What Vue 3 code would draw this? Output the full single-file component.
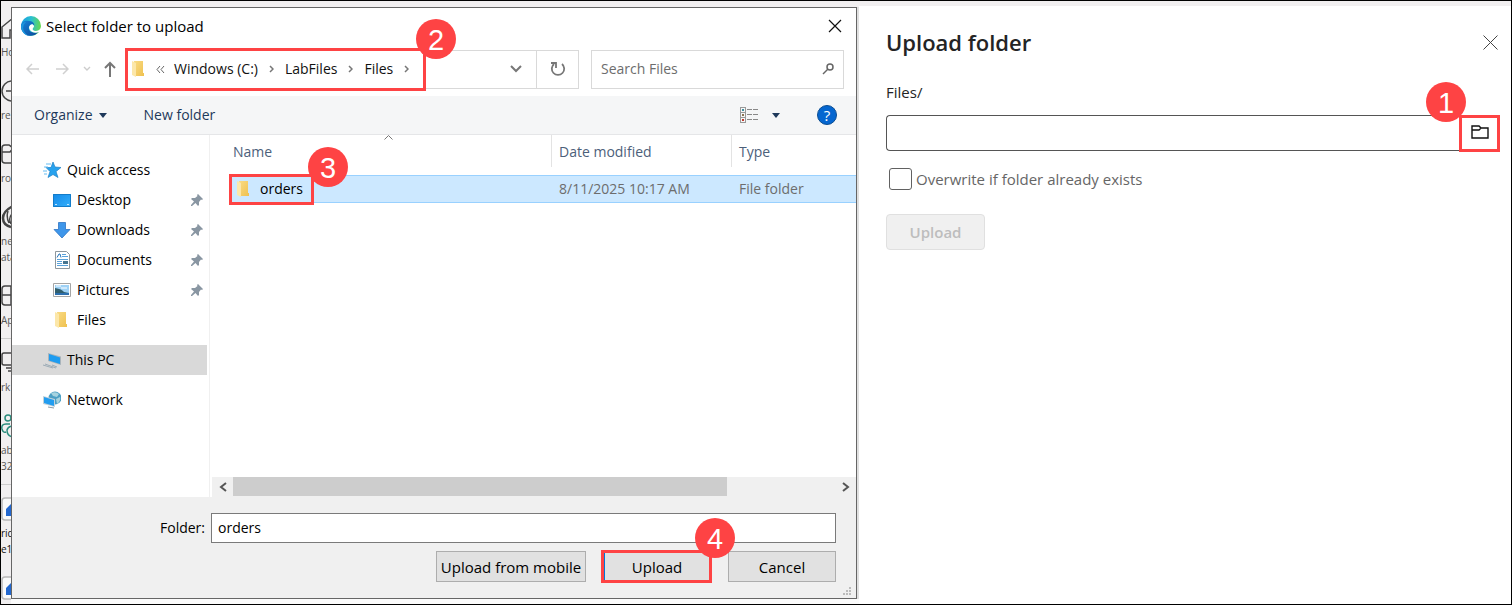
<script setup>
import { ref } from 'vue'

const railItems = [
  { icon: 'home', lines: ['Ho'] },
  { icon: 'create', lines: ['re'] },
  { icon: 'browse', lines: ['ro'] },
  { icon: 'lake', lines: ['ne', 'ata'] },
  { icon: 'apps', lines: ['Ap'], ruled: true },
  { icon: 'monitor', lines: ['rk'] },
  { icon: 'people', lines: ['ab', '32'], ruled: true },
  { icon: 'tile', lines: ['ric', 'e1'], dark: true },
  { icon: 'tile', lines: [] }
]
const places = [
  { name: 'Quick access', icon: 'star', level: 0 },
  { name: 'Desktop', icon: 'desktop', level: 1, pinned: true },
  { name: 'Downloads', icon: 'download', level: 1, pinned: true },
  { name: 'Documents', icon: 'document', level: 1, pinned: true },
  { name: 'Pictures', icon: 'picture', level: 1, pinned: true },
  { name: 'Files', icon: 'folder', level: 1 },
  { name: 'This PC', icon: 'pc', level: 0, active: true, spaced: true },
  { name: 'Network', icon: 'network', level: 0, spaced: true }
]
const crumbs = ['Windows (C:)', 'LabFiles', 'Files']
const folder = ref('orders')
const search = ref('')
const path = ref('')
const overwrite = ref(false)
</script>

<template>
  <div class="page">
    <svg class="defs" width="0" height="0" aria-hidden="true">
      <defs>
        <linearGradient id="gFolder" x1="0" x2="1" y1="0" y2="1">
          <stop offset="0" stop-color="#f9db84" /><stop offset="1" stop-color="#efc14f" />
        </linearGradient>
        <linearGradient id="gEdge" x1="0" x2="1" y1="0.3" y2="0.4">
          <stop offset="0" stop-color="#1a9fe0" /><stop offset="0.5" stop-color="#2bc0d0" /><stop offset="1" stop-color="#66d84e" />
        </linearGradient>
        <linearGradient id="gEdgeDark" x1="0" x2="1" y1="0" y2="1">
          <stop offset="0" stop-color="#1683d8" /><stop offset="1" stop-color="#0c4a9c" />
        </linearGradient>
        <linearGradient id="gBlue" x1="0" x2="1" y1="0" y2="1">
          <stop offset="0" stop-color="#1389e8" /><stop offset="1" stop-color="#35b0fb" />
        </linearGradient>
        <symbol id="folder" viewBox="0 0 18 18">
          <path d="M4 1h9v12h1v3H4z" fill="url(#gFolder)" />
          <path d="M2 1l4 2v14l-4-2z" fill="#fce7a9" />
        </symbol>
      </defs>
    </svg>

    <nav class="rail" aria-label="Workspace">
      <div v-for="(item, i) in railItems" :key="i" class="rail-item" :class="{ ruled: item.ruled, dark: item.dark }">
        <svg width="24" height="24" viewBox="0 0 24 24" fill="none" stroke="#444" stroke-width="1.5">
          <path v-if="item.icon === 'home'" d="M1 22V11L12 2l9 9v11h-6v-8H9v8z" />
          <template v-else-if="item.icon === 'create'"><circle cx="11" cy="12" r="10" /><path d="M5 12h12M11 6v12" /></template>
          <path v-else-if="item.icon === 'browse'" d="M1 6q0-3 3-3h4l4 3h8v15H4q-3 0-3-3zM1 10h8l3-4" />
          <template v-else-if="item.icon === 'lake'"><path d="M12 1Q2 6 2 13t8 9" stroke-width="2.500" /><path d="M7 6q-2 6 1 12M11 9q-4 4-1 10" stroke-width="1.500" /></template>
          <path v-else-if="item.icon === 'apps'" d="M4 2h16v19H4q-3 0-3-3V5q0-3 3-3zM1 11h19M10 2v19" />
          <path v-else-if="item.icon === 'monitor'" d="M3 2h18v12H3q-2 0-2-2V4q0-2 2-2zM5 17h14M7 20h10" />
          <g v-else-if="item.icon === 'people'" stroke="#2a8c7c"><circle cx="7" cy="4" r="3" /><path d="M9 10H5q-5 0-4 5 1 4 4 3M12 12q-5 0-6 4 0 6 6 7" /></g>
          <template v-else><rect x="1" y="1" width="24" height="22" rx="3" fill="#fafafa" stroke="#b8b8b8" /><path d="M5 12l6-6 6 4v9H5z" fill="#2368cf" stroke="none" /></template>
        </svg>
        <span v-for="line in item.lines" :key="line" class="rail-label">{{ line }}</span>
      </div>
    </nav>

    <div class="stage">
      <section class="dialog" role="dialog" aria-label="Select folder to upload">
        <header class="title-bar">
          <svg width="22" height="22" viewBox="0 0 22 22">
            <circle cx="11" cy="11" r="10" fill="url(#gEdge)" />
            <path d="M1 11c0-4 4-6 8-5 4 0 6 3 5 5-1-2-4-2-5 1-1 4 3 7 9 5-5 7-17 4-17-6z" fill="url(#gEdgeDark)" />
            <path d="M6 7c-5 4-3 11 3 14C4 20 1 16 1 11c1-3 3-4 5-4z" fill="#1c96dd" />
            <path d="M14 11c0 2-2 2-1 4 2 2 6 1 8-2l1 5-3-1c-5 2-10-1-10-5 1-3 4-4 5-1z" fill="#fff" />
          </svg>
          <h2>Select folder to upload</h2>
          <button class="plain close" type="button" aria-label="Close dialog">
            <svg width="14" height="14" viewBox="0 0 14 14" stroke="#111" stroke-width="1.2"><path d="M1 1l12 12M13 1L1 13" /></svg>
          </button>
        </header>

        <div class="address-row">
          <div class="nav-buttons">
            <button class="plain" type="button" aria-label="Back"><svg width="14" height="12" viewBox="0 0 14 12" fill="none" stroke="#d0d0d0" stroke-width="1.5"><path d="M13 6H2M6 1L1 6l5 5" /></svg></button>
            <button class="plain" type="button" aria-label="Forward"><svg width="14" height="12" viewBox="0 0 14 12" fill="none" stroke="#d0d0d0" stroke-width="1.5"><path d="M1 6h11M8 1l5 5-5 5" /></svg></button>
            <button class="plain" type="button" aria-label="Recent"><svg width="8" height="6" viewBox="0 0 8 6" fill="none" stroke="#ccc" stroke-width="1.4"><path d="M1 1l3 3 3-3" /></svg></button>
            <button class="plain" type="button" aria-label="Up"><svg width="12" height="16" viewBox="0 0 12 16" fill="none" stroke="#777" stroke-width="2"><path d="M6 16V2M1 7l5-5 5 5" /></svg></button>
          </div>
          <div class="address">
            <div class="crumbs">
              <svg width="18" height="18"><use href="#folder" /></svg>
              <svg class="double" width="9" height="7" viewBox="0 0 9 7" fill="none" stroke="#666" stroke-width="1"><path d="M4 0L1 3.500l3 3.500M8 0L5 3.500l3 3.500" /></svg>
              <template v-for="c in crumbs" :key="c">
                <a href="#">{{ c }}</a>
                <svg class="sep" width="5" height="8" viewBox="0 0 5 8" fill="none" stroke="#777" stroke-width="1.500"><path d="M1 1l3 3-3 3" /></svg>
              </template>
              <span class="badge address-badge">2</span>
            </div>
            <button class="plain history" type="button" aria-label="Previous locations"><svg width="12" height="8" viewBox="0 0 12 8" fill="none" stroke="#777" stroke-width="2"><path d="M1 1l5 5 5-5" /></svg></button>
            <button class="plain refresh" type="button" aria-label="Refresh"><svg width="16" height="16" viewBox="0 0 16 16" fill="none" stroke="#777" stroke-width="1.800"><path d="M4 3a6.200 6.200 0 1 0 8 0M1 2h5v5" /></svg></button>
          </div>
          <label class="search">
            <input v-model="search" type="text" placeholder="Search Files" aria-label="Search Files" />
            <svg width="12" height="12" viewBox="0 0 12 12" fill="none" stroke="#666" stroke-width="1.500"><circle cx="8" cy="4" r="3" /><path d="M6 6l-5 5" /></svg>
          </label>
        </div>

        <div class="toolbar">
          <button class="plain" type="button">Organize <svg class="caret" width="8" height="5" viewBox="0 0 8 5"><path d="M0 0h8L4 5z" fill="#1e395b" /></svg></button>
          <button class="plain new-folder" type="button">New folder</button>
          <button class="plain view" type="button" aria-label="Change view">
            <svg width="18" height="16" viewBox="0 0 18 16" fill="none" shape-rendering="crispEdges"><path d="M.5.500h5v15h-5zM0 5.500h6M0 10.500h6" stroke="#999" /><path d="M7 2.500h5M13 2.500h5M7 7.500h5M13 7.500h5M7 12.500h5M13 12.500h5" stroke="#888" /><path d="M2 2h2v2H2z" fill="#3f8f9f" /><path d="M2 7h2v2H2z" fill="#8a7350" /><path d="M2 12h2v2H2z" fill="#c0392b" /></svg>
            <svg width="8" height="5" viewBox="0 0 8 5"><path d="M0 0h8L4 5z" fill="#1e395b" /></svg>
          </button>
          <button class="help" type="button" aria-label="Help">?</button>
        </div>

        <div class="body">
          <ul class="places">
            <li v-for="p in places" :key="p.name" :class="{ active: p.active, nested: p.level, spaced: p.spaced }">
              <a href="#">
                <svg width="18" height="18" viewBox="0 0 18 18">
                  <template v-if="p.icon === 'star'"><path d="M10 1l2 5 6 .5-5 4 2 6-5-3-5 3 2-6-4-4h5z" fill="#27a2ee" stroke="#1d7fc6" stroke-width=".7" /><path d="M3 3h5M1 6h4M0 10h4M1 13h3" stroke="#64bdf3" /></template>
                  <template v-else-if="p.icon === 'desktop'"><path d="M0 3h18v13H0z" fill="url(#gBlue)" /><path d="M.5 3.500h17v12H.5z" fill="none" stroke="#147cc8" /><path d="M2 13.500h2M14 13.500h2" stroke="#bfe5ff" /></template>
                  <path v-else-if="p.icon === 'download'" d="M5.500 1.500h7v7H17L9 17 1 8.500h4.500z" fill="#3e96ea" stroke="#2f75c4" stroke-width=".8" />
                  <template v-else-if="p.icon === 'document'"><path d="M2.500.5h11l3 3v14h-14z" fill="#fff" stroke="#8e979d" /><path d="M9 3.500h4M9 5.500h6M4 8.500h11M4 10.500h5M4 12.500h5M4 14.500h11" stroke="#5aa2da" /><path d="M4 6.500l2-3.500h1l1 3.500" fill="none" stroke="#2675bb" /><path d="M10 10h5v3h-5z" fill="#46758f" /></template>
                  <template v-else-if="p.icon === 'picture'"><path d="M.5 2.500h17v13H.5z" fill="#fff" stroke="#a5a5a5" /><path d="M2 4h14v10H2z" fill="#9fd2f6" /><path d="M2 7q7 1 9 4l5 1v2H2z" fill="#315f6e" /><path d="M2 12h14v2H2z" fill="#2d6fae" /><path d="M3 5h5M8 7h6" stroke="#fff" /></template>
                  <use v-else-if="p.icon === 'folder'" href="#folder" />
                  <template v-else-if="p.icon === 'pc'"><path d="M5 2l13 3.500V14L5 10z" fill="#a9b4bb" /><path d="M6 3l11 3.500V13L6 9.500z" fill="#1e9cf0" /><path d="M9 14l5 2M0 14l10 3M2 13l11 4" stroke="#9cabb5" /></template>
                  <template v-else><circle cx="12" cy="7" r="6.500" fill="#4c9fc4" /><path d="M8 2q5-2 8 1l-2 3-4-1zM13 8l4-2q1 4-3 7z" fill="#a7d3df" /><path d="M0 5l12 3v8L0 13z" fill="#c3d2da" /><path d="M1 6l10 3v6L1 12z" fill="#229df0" /><path d="M5 16l6 1" stroke="#8a9aa5" /></template>
                </svg>
                <span>{{ p.name }}</span>
                <svg v-if="p.pinned" class="pin" width="12" height="12" viewBox="0 0 12 12"><path d="M7 0l5 5-1 1-1-.5L8 8v3L7 12 4.500 9 1 12l-1 0 0-1L3 7.500 0 5l1-1h3l2.500-2L6 1z" fill="#8996a2" /></svg>
              </a>
            </li>
          </ul>

          <div class="listing">
            <svg class="sort" width="9" height="5" viewBox="0 0 9 5" fill="none" stroke="#777"><path d="M.5 4.500l4-4 4 4" /></svg>
            <table>
              <colgroup><col class="c-name" /><col class="c-date" /><col /></colgroup>
              <thead>
                <tr><th scope="col"><div>Name</div></th><th scope="col"><div>Date modified</div></th><th scope="col"><div>Type</div></th></tr>
              </thead>
              <tbody>
                <tr>
                  <td>
                    <div class="file"><svg width="18" height="18"><use href="#folder" /></svg><span>orders</span><span class="badge file-badge">3</span></div>
                  </td>
                  <td>8/11/2025 10:17 AM</td>
                  <td>File folder</td>
                </tr>
              </tbody>
            </table>
            <div class="scrollbar">
              <button class="plain" type="button" aria-label="Scroll left"><svg width="8" height="10" viewBox="0 0 8 10" fill="none" stroke="#555" stroke-width="2"><path d="M7 1L2 5l5 4" /></svg></button>
              <div class="track"><div class="thumb"></div></div>
              <button class="plain" type="button" aria-label="Scroll right"><svg width="8" height="10" viewBox="0 0 8 10" fill="none" stroke="#555" stroke-width="2"><path d="M1 1l5 4-5 4" /></svg></button>
            </div>
          </div>
        </div>

        <footer class="actions">
          <div class="folder-row">
            <label for="folder-name">Folder:</label>
            <input id="folder-name" v-model="folder" type="text" />
          </div>
          <div class="buttons">
            <button class="mobile" type="button">Upload from mobile</button>
            <div class="marked">
              <button type="button">Upload</button>
              <span class="badge upload-badge">4</span>
            </div>
            <button class="cancel" type="button">Cancel</button>
          </div>
          <svg class="grip" width="9" height="8" viewBox="0 0 9 8" fill="#bbb"><path d="M6 0h2v2H6zM3 3h2v2H3zM6 3h2v2H6zM0 6h2v2H0zM3 6h2v2H3zM6 6h2v2H6z" /></svg>
        </footer>
      </section>
    </div>

    <aside class="panel">
      <header>
        <h1>Upload folder</h1>
        <button class="plain" type="button" aria-label="Close panel"><svg width="15" height="15" viewBox="0 0 15 15" stroke="#444"><path d="M.5.5l14 14M14.500.5l-14 14" /></svg></button>
      </header>
      <label class="path-label" for="upload-path">Files/</label>
      <div class="path">
        <input id="upload-path" v-model="path" type="text" />
        <button class="browse" type="button" aria-label="Browse for folder">
          <svg width="18" height="14" viewBox="0 0 18 14" fill="none" stroke="#111" stroke-width="1.400"><path d="M1 13V1h7l2 2h7v10zM1 5h7l2-2" /></svg>
        </button>
        <span class="badge path-badge">1</span>
      </div>
      <label class="check"><input v-model="overwrite" type="checkbox" /><span>Overwrite if folder already exists</span></label>
      <button class="submit" type="button" disabled>Upload</button>
    </aside>
  </div>
</template>

<style>
html, body { margin: 0; background: #f1eff0; }
</style>

<style scoped>
* { box-sizing: border-box; }
.page {
  position: relative;
  display: grid;
  grid-template-columns: 10px minmax(0, 848fr) minmax(0, 652fr);
  height: 100vh;
  min-height: 560px;
  padding-top: 5px;
  border: 1px solid #000;
  background: #f1eff0;
  color: #111;
  font: 14px/20px "Open Sans", "Noto Sans", sans-serif;
  overflow: hidden;
}
.defs { position: absolute; }
svg { display: block; flex: none; }
button, input { font: inherit; color: inherit; }
.plain { display: flex; align-items: center; justify-content: center; padding: 0; border: 0; background: none; }
a { color: inherit; text-decoration: none; }
h1, h2, ul { margin: 0; padding: 0; }

.rail { min-height: 0; padding-top: 10px; overflow: hidden; }
.rail-item { display: flex; flex-direction: column; margin-bottom: 19px; }
.rail-item svg { margin-bottom: 4px; }
.rail-item.ruled { padding-bottom: 10px; margin-bottom: 12px; border-bottom: 1px solid #ccc; }
.rail-label { font-size: 10px; line-height: 16px; color: #555; }
.rail-item.dark .rail-label { color: #111; }

.stage {
  min-width: 0;
  display: flex;
  padding: 1px 2px 5px 0;
  background: linear-gradient(#f1eff0 0 1px, #e0e0e0 1px calc(100% - 5px), #fbfbfb calc(100% - 5px));
}
.dialog {
  flex: 1;
  min-width: 0;
  display: flex;
  flex-direction: column;
  border: 1px solid #666;
  background: #fff;
}
.title-bar { display: flex; align-items: center; height: 36px; padding: 0 14px 0 8px; }
h2 { margin-left: 4px; font-size: 15px; font-weight: 400; line-height: 20px; color: #000; }
.close { margin-left: auto; }

.address-row { display: flex; align-items: center; height: 52px; padding: 0 12px 2px 14px; }
.nav-buttons { display: flex; align-items: center; width: 100px; }
.nav-buttons .plain:nth-child(2) { margin-left: 15px; }
.nav-buttons .plain:nth-child(3) { margin-left: 14px; }
.nav-buttons .plain:nth-child(4) { margin-left: 13px; }
.address { flex: 1; display: flex; height: 39px; border: 1px solid #d9d9d9; }
.crumbs {
  position: relative;
  display: flex;
  align-items: center;
  width: 301px;
  margin: -3px 0 -3px -2px;
  padding-left: 2px;
  border: 3px solid #fe4344;
  white-space: nowrap;
}
.double { margin: 0 9px 0 8px; }
.sep { margin: 0 11px; }
.history { margin-left: auto; width: 40px; }
.refresh { width: 42px; border-left: 1px solid #d9d9d9; }
.search { display: flex; align-items: center; width: 253px; height: 39px; margin-left: 12px; padding: 0 9px; border: 1px solid #d9d9d9; }
.search input { flex: 1; min-width: 0; padding: 0; border: 0; outline: 0; }
.search input::placeholder { color: #6d6d6d; opacity: 1; }

.toolbar { display: flex; align-items: center; height: 39px; padding: 0 19px 0 22px; border-bottom: 1px solid #e5e6e8; background: #f5f6f7; color: #1e395b; }
.caret { margin-left: 6px; }
.new-folder { margin-left: 37px; }
.view { gap: 14px; margin-left: auto; }
.help { width: 20px; height: 20px; margin-left: 37px; padding: 0; border: 1px solid #0b4d92; border-radius: 50%; background: #0566d0; color: #fff; font-size: 15px; line-height: 18px; }

.body { flex: 1; display: flex; min-height: 0; }
.places { width: 198px; flex: none; padding: 20px 2px 0 0; border-right: 1px solid #f0f0f0; list-style: none; color: #000; }
.places a { display: flex; align-items: center; gap: 6px; height: 30px; padding: 0 4px 0 31px; }
.places .nested a { padding-left: 41px; }
.places .spaced { margin-top: 10px; }
.places .active { background: #d9d9d9; }
.pin { margin-left: auto; }

.listing { position: relative; flex: 1; min-width: 0; display: flex; flex-direction: column; }
.sort { position: absolute; left: 174px; top: 0; }
table { width: 100%; padding-left: 19px; border-spacing: 0; table-layout: fixed; }
.c-name { width: 322px; }
.c-date { width: 180px; }
th { height: 40px; padding: 0 0 8px; text-align: left; font-weight: 400; color: #4c607a; }
th div { display: flex; align-items: center; height: 32px; padding: 2px 0 0 7px; border-left: 1px solid #e3e3e3; }
th:first-child div { padding-left: 3px; border-left-color: transparent; }
td { height: 28px; padding: 0 0 0 8px; border: solid #99d1ff; border-width: 1px 0; background: #cce8ff; color: #6d6d6d; }
td:first-child { padding: 0; color: #000; }
.file { position: relative; display: flex; align-items: center; width: 85px; height: 31px; margin: -3px 0; padding-left: 3px; border: 3px solid #fe4344; }
.file span:nth-child(2) { margin-left: 7px; }
.scrollbar { display: flex; height: 20px; margin: auto 0 0 2px; background: #f0f0f0; }
.scrollbar .plain { width: 21px; }
.track { flex: 1; padding-bottom: 1px; }
.thumb { width: 82%; height: 100%; background: #cdcdcd; }

.actions { position: relative; padding: 16px 20px 15px 0; background: #f0f0f0; color: #000; }
.folder-row { display: flex; align-items: center; }
.folder-row label { width: 199px; padding-right: 6px; text-align: right; }
.folder-row input { flex: 1; min-width: 0; height: 30px; padding: 0 6px 2px; border: 1px solid #7a7a7a; background: #fff; }
.buttons { display: flex; align-items: center; justify-content: flex-end; margin-top: 7px; }
.buttons button { height: 31px; padding: 0; border: 1px solid #adadad; background: #e1e1e1; font-size: 15px; }
.buttons .mobile { width: 150px; }
.buttons .cancel { width: 108px; }
.marked { position: relative; display: flex; width: 111px; height: 33px; margin: 0 16px 0 15px; border: 3px solid #fe4344; }
.buttons .marked button { flex: 1; height: auto; border: 0; border-left: 1px solid #0078d7; }
.grip { position: absolute; right: 4px; bottom: 3px; }

.badge {
  position: absolute;
  z-index: 2;
  width: 40px;
  height: 40px;
  border-radius: 50%;
  background: #fe4344;
  color: #fff;
  font: 29px/42px "Liberation Sans", Arial, sans-serif;
  text-align: center;
}
.address-badge { right: -33px; top: -32px; }
.file-badge { right: -37px; top: -30px; }
.upload-badge { right: -26px; top: -35px; }

.panel { min-width: 0; padding: 24px 11px 0 27px; background: #fff; color: #242424; }
.panel header { display: flex; align-items: center; justify-content: space-between; height: 24px; padding-right: 2px; }
h1 { font-size: 22px; font-weight: 600; line-height: 24px; }
.path-label { display: block; margin-top: 28px; font-size: 15px; font-weight: 500; line-height: 20px; }
.path { position: relative; display: flex; height: 37px; margin-top: 13px; }
.path input { flex: 1; min-width: 0; height: 36px; padding: 0 10px; border: 1px solid #555; border-right: 0; border-radius: 4px 0 0 4px; outline: 0; background: #fff; }
.browse { display: flex; align-items: center; justify-content: center; width: 41px; padding: 0 0 3px; border: 3px solid #fe4344; background: #fff; }
.path-badge { right: 34px; top: -33px; }
.check { display: flex; align-items: center; gap: 4px; margin: 16px 0 0 3px; color: #666; font-size: 15px; }
.check input { appearance: none; width: 23px; height: 22px; margin: 0; border: 1px solid #616161; border-radius: 3px; background: #fff; }
.submit { width: 99px; height: 36px; margin-top: 24px; padding: 0; border: 1px solid #e0e0e0; border-radius: 4px; background: #f0f0f0; color: #bdbdbd; font-size: 15px; font-weight: 600; }
</style>
